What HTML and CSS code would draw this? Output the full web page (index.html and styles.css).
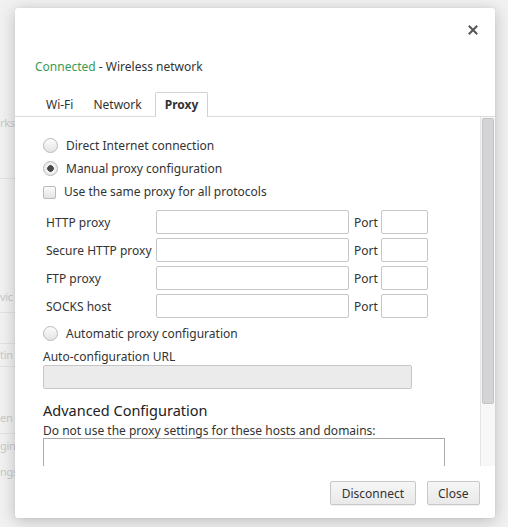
FILE: index.html
```html
<!DOCTYPE html>
<html>
<head>
<meta charset="utf-8">
<link rel="stylesheet" href="styles.css">
</head>
<body>
<div class="bg-page">
  <div class="bg-row r1">rks</div>
  <div class="bg-line l1"></div>
  <div class="bg-row r2">vic</div>
  <div class="bg-line l2"></div>
  <div class="bg-row r3">tin</div>
  <div class="bg-row r4">en</div>
  <div class="bg-line l4"></div>
  <div class="bg-row r5">gin</div>
  <div class="bg-row r6">ngs</div>
</div>

<div class="dialog">
  <div class="head">
    <div class="close-row">
      <svg class="close" width="10" height="10" viewBox="0 0 10 10"><path d="M1.5 1.5 L8.5 8.5 M8.5 1.5 L1.5 8.5" stroke="#555" stroke-width="2" stroke-linecap="square"/></svg>
    </div>
    <div class="status"><span class="ok">Connected</span> - Wireless network</div>
    <div class="tabs">
      <div class="tab">Wi-Fi</div>
      <div class="tab">Network</div>
      <div class="tab active">Proxy</div>
    </div>
  </div>

  <div class="body">
    <div class="content">
      <label class="opt"><input type="radio" name="p" class="radio"> Direct Internet connection</label>
      <label class="opt"><input type="radio" name="p" class="radio" checked> Manual proxy configuration</label>
      <label class="opt chk"><input type="checkbox" class="check"> Use the same proxy for all protocols</label>

      <div class="rows">
        <div class="row"><span class="lbl">HTTP proxy</span><span class="field"></span><span class="port">Port</span><span class="pfield"></span></div>
        <div class="row"><span class="lbl">Secure HTTP proxy</span><span class="field"></span><span class="port">Port</span><span class="pfield"></span></div>
        <div class="row"><span class="lbl">FTP proxy</span><span class="field"></span><span class="port">Port</span><span class="pfield"></span></div>
        <div class="row"><span class="lbl">SOCKS host</span><span class="field"></span><span class="port">Port</span><span class="pfield"></span></div>
      </div>

      <label class="opt auto"><input type="radio" name="p" class="radio"> Automatic proxy configuration</label>
      <div class="url-label">Auto-configuration URL</div>
      <div class="url-field"></div>

      <h3 class="adv">Advanced Configuration</h3>
      <p class="adv-desc">Do not use the proxy settings for these hosts and domains:</p>
      <div class="textarea"></div>
    </div>
    <div class="scrollbar"><div class="thumb"></div></div>
  </div>

  <div class="foot">
    <button class="btn">Disconnect</button>
    <button class="btn">Close</button>
  </div>
</div>
</body>
</html>
```

FILE: styles.css
```css
html, body {
  margin: 0;
  padding: 0;
}
body {
  width: 508px;
  height: 527px;
  overflow: hidden;
  background: #f1f1f1;
  font-family: "Noto Sans", "Open Sans", sans-serif;
  font-size: 12px;
  color: #333;
  position: relative;
}

/* faint page behind the dialog */
.bg-page {
  display: flex;
  flex-direction: column;
  width: 15px;
  color: #c9c9c9;
}
.bg-row {
  height: 18px;
  line-height: 18px;
  white-space: nowrap;
  font-size: 11px;
  letter-spacing: -0.3px;
}
.bg-line {
  width: 15px;
  height: 1px;
  background: #e2e2e2;
}
.r1 { margin-top: 114px; }
.l1 { margin-top: 46px; }
.r2 { margin-top: 109px; }
.l2 { margin-top: 6px; }
.r3 {
  margin-top: 30px;
  border-top: 1px solid #e2e2e2;
  border-bottom: 1px solid #e2e2e2;
  height: 22px;
  line-height: 22px;
  width: 15px;
}
.r4 { margin-top: 42px; }
.l4 { margin-top: 6px; }
.r5 { margin-top: 3px; }
.r6 { margin-top: 8px; }

/* dialog */
.dialog {
  position: absolute;
  left: 15px;
  top: 8px;
  width: 480px;
  height: 510px;
  background: #fff;
  border-radius: 3px;
  box-shadow: 0 3px 16px rgba(0, 0, 0, 0.22), 0 0 2px rgba(0, 0, 0, 0.08);
  display: flex;
  flex-direction: column;
  overflow: hidden;
}
.head {
  padding-top: 17px;
  border-bottom: 1px solid #dcdcdc;
}
.close-row {
  display: flex;
  justify-content: flex-end;
  height: 26px;
  padding-right: 17px;
}
.close {
  display: block;
}
.status {
  margin-top: 7px;
  padding-left: 20px;
  line-height: 18px;
  color: #333;
}
.ok {
  color: #3a9b54;
}
.tabs {
  display: flex;
  margin-top: 16px;
  padding-left: 21px;
}
.tab {
  height: 23px;
  line-height: 23px;
  padding: 0 9px;
  border: 1px solid transparent;
  border-bottom: none;
  margin-bottom: -1px;
  color: #333;
}
.tab.active {
  font-weight: bold;
  border-color: #d2d2d2;
  background: #fff;
  height: 24px;
  line-height: 24px;
  margin-left: 3px;
  border-radius: 2px 2px 0 0;
}

/* scroll area */
.body {
  display: flex;
  height: 349px;
  overflow: hidden;
}
.content {
  flex: 1;
  padding: 17px 0 0 28px;
  overflow: hidden;
}
.opt {
  display: flex;
  align-items: center;
  gap: 8px;
  height: 23px;
  color: #333;
}
.radio, .check {
  -webkit-appearance: none;
  appearance: none;
  margin: 0;
  flex: none;
  border: 1px solid #b9b9b9;
  background: linear-gradient(#fbfbfb, #e4e4e4);
}
.radio {
  width: 15px;
  height: 15px;
  border-radius: 50%;
}
.radio:checked {
  background: radial-gradient(circle, #4a4a4a 0, #4a4a4a 3px, #f2f2f2 3.6px, #e4e4e4 100%);
}
.check {
  width: 13px;
  height: 13px;
  border-radius: 2px;
  margin-top: 1px;
}
.rows {
  display: flex;
  flex-direction: column;
  gap: 4px;
  margin-top: 7px;
}
.row {
  display: flex;
  align-items: center;
  height: 24px;
}
.lbl {
  width: 110px;
  padding-left: 3px;
  white-space: nowrap;
}
.field {
  width: 191px;
  height: 22px;
  border: 1px solid #c6c6c6;
  border-radius: 2px;
  background: #fff;
}
.port {
  margin-left: 5px;
  width: 27px;
}
.pfield {
  width: 45px;
  height: 22px;
  border: 1px solid #c6c6c6;
  border-radius: 2px;
  background: #fff;
}
.auto {
  margin-top: 4px;
}
.url-label {
  margin-top: 3px;
  line-height: 17px;
}
.url-field {
  width: 367px;
  height: 22px;
  border: 1px solid #c6c6c6;
  border-radius: 2px;
  background: #ebebeb;
}
.adv {
  margin: 11px 0 0;
  font-size: 14.5px;
  font-weight: normal;
  line-height: 20px;
  color: #222;
}
.adv-desc {
  margin: 2px 0 0;
  line-height: 17px;
}
.textarea {
  margin-top: -1px;
  width: 400px;
  height: 70px;
  border: 1px solid #a9a9a9;
  background: #fff;
}
.scrollbar {
  width: 12px;
  padding: 1px 1px 0 1px;
  border-left: 1px solid #e4e4e4;
  background: #f7f7f7;
}
.thumb {
  height: 286px;
  background: #d4d4d6;
  border: 1px solid #c4c4c6;
  border-radius: 2px;
  box-sizing: border-box;
}

/* footer */
.foot {
  display: flex;
  justify-content: flex-end;
  gap: 11px;
  padding: 15px 15px 0 0;
}
.btn {
  font-family: "Noto Sans", "Open Sans", sans-serif;
  font-size: 12px;
  color: #333;
  height: 24px;
  padding: 0 10.5px;
  border: 1px solid #c8c8c8;
  border-radius: 2px;
  background: linear-gradient(#f6f6f6, #e9e9e9);
  box-shadow: 0 1px 0 rgba(0, 0, 0, 0.06);
}
```
